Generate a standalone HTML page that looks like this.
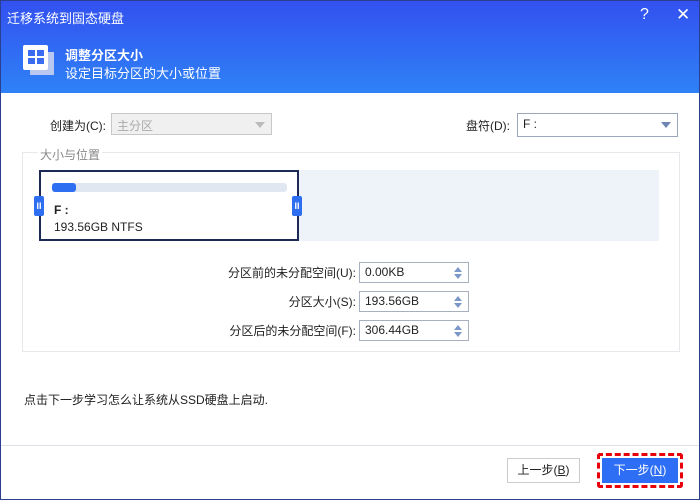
<!DOCTYPE html>
<html><head><meta charset="utf-8"><style>
*{margin:0;padding:0;box-sizing:border-box}
body{width:700px;height:500px;overflow:hidden;font-family:"Liberation Sans","Noto Sans CJK SC",sans-serif;font-size:12px;color:#222;background:#fff;position:relative}
.frame{position:absolute;left:0;top:0;width:700px;height:500px;border:1px solid #2a3f8f;pointer-events:none}
.hdr{position:absolute;left:0;top:0;width:700px;height:93px;background:linear-gradient(#3350f0,#2e82f6)}
.abs{position:absolute}
.t{color:#fff}
.box{position:absolute;border:1px solid #a8b0bd;background:#fff;height:22px;padding:3px 5px;font-size:12px}
.arr{position:absolute;right:6px;top:8px;width:0;height:0;border-left:5px solid transparent;border-right:5px solid transparent;border-top:6px solid #6d86b2}
.spin{position:absolute;right:6px;top:3px;width:8px;height:14px}
.spin:before{content:"";position:absolute;left:0;top:1px;border-left:4px solid transparent;border-right:4px solid transparent;border-bottom:5px solid #7b98c8}
.spin:after{content:"";position:absolute;left:0;top:8px;border-left:4px solid transparent;border-right:4px solid transparent;border-top:5px solid #7b98c8}
.lbl{position:absolute;text-align:right;width:200px}
.hdl{position:absolute;width:10px;height:20px;background:#2d6ff0;border-radius:2px;color:#fff;font-size:9px;text-align:center;line-height:20px;font-weight:bold}
</style></head><body>
<div class="hdr"></div>
<div class="abs t" style="left:7px;top:8px;font-size:13px">迁移系统到固态硬盘</div>
<div class="abs t" style="left:640px;top:6px;font-size:16px">?</div>
<div class="abs t" style="left:676px;top:5px;font-size:17px">✕</div>
<div class="abs" style="left:30px;top:52px;width:24px;height:23px;background:#b8c8f0"></div>
<div class="abs" style="left:23px;top:45px;width:25px;height:25px;background:#fff;border-radius:2px"></div>
<div class="abs" style="left:28px;top:50px;width:7px;height:6px;background:#3a6cf0"></div>
<div class="abs" style="left:37px;top:50px;width:7px;height:6px;background:#3a6cf0"></div>
<div class="abs" style="left:28px;top:58px;width:7px;height:6px;background:#3a6cf0"></div>
<div class="abs" style="left:37px;top:58px;width:7px;height:6px;background:#3a6cf0"></div>
<div class="abs t" style="left:65px;top:45px;font-size:13px;font-weight:bold">调整分区大小</div>
<div class="abs t" style="left:65px;top:63px;font-size:13px">设定目标分区的大小或位置</div>

<div class="abs" style="left:50px;top:117px">创建为(C):</div>
<div class="box" style="left:111px;top:113px;width:161px;background:#f0f0f0;border-color:#c8c8c8;color:#aaa">主分区<div class="arr" style="border-top-color:#bbb"></div></div>
<div class="abs" style="left:466px;top:117px">盘符(D):</div>
<div class="box" style="left:517px;top:113px;width:161px;height:24px;border-color:#9aa7bd">F :<div class="arr"></div></div>

<div class="abs" style="left:22px;top:152px;width:658px;height:200px;border:1px solid #e6e8ec"></div>
<div class="abs" style="left:38px;top:146px;background:#fff;color:#888;padding:0 2px">大小与位置</div>
<div class="abs" style="left:298px;top:170px;width:361px;height:71px;background:#eef2f9"></div>
<div class="abs" style="left:39px;top:170px;width:260px;height:71px;border:2px solid #1d2a55;background:#fff"></div>
<div class="abs" style="left:52px;top:183px;width:235px;height:9px;background:#e1e7f1;border-radius:3px"></div>
<div class="abs" style="left:52px;top:183px;width:24px;height:9px;background:#2e6ef0;border-radius:3px"></div>
<div class="hdl" style="left:34px;top:196px">II</div>
<div class="hdl" style="left:292px;top:196px">II</div>
<div class="abs" style="left:54px;top:203px;font-weight:bold">F :</div>
<div class="abs" style="left:54px;top:220px">193.56GB NTFS</div>

<div class="lbl" style="left:156px;top:264px">分区前的未分配空间(U):</div>
<div class="lbl" style="left:156px;top:293px">分区大小(S):</div>
<div class="lbl" style="left:156px;top:322px">分区后的未分配空间(F):</div>
<div class="box" style="left:359px;top:262px;width:110px;height:21px;padding:2px 5px">0.00KB<div class="spin"></div></div>
<div class="box" style="left:359px;top:291px;width:110px;height:21px;padding:2px 5px">193.56GB<div class="spin"></div></div>
<div class="box" style="left:359px;top:320px;width:110px;height:21px;padding:2px 5px">306.44GB<div class="spin"></div></div>

<div class="abs" style="left:24px;top:391px">点击下一步学习怎么让系统从SSD硬盘上启动.</div>
<div class="abs" style="left:0;top:445px;width:700px;height:1px;background:#dde1e8"></div>
<div class="abs" style="left:507px;top:458px;width:73px;height:25px;border:1px solid #ccc;background:#fff;text-align:center;line-height:23px">上一步(<u>B</u>)</div>
<div class="abs" style="left:597px;top:453px;width:86px;height:35px;border:3px dashed #e8000b;border-radius:3px"></div>
<div class="abs" style="left:602px;top:458px;width:76px;height:25px;background:#2e6ef5;color:#fff;text-align:center;line-height:25px">下一步(<u>N</u>)</div>
<div class="frame"></div>
</body></html>
